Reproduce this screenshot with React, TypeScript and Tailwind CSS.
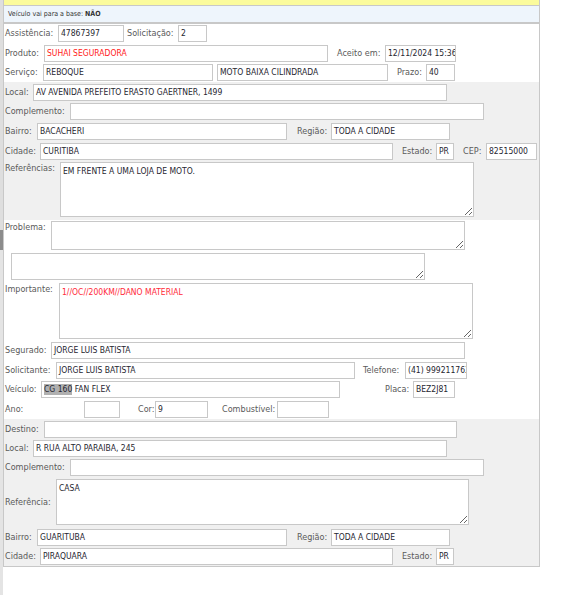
import React from "react";

const FONT = "font-['DejaVu_Sans_Condensed','DejaVu_Sans',sans-serif]";

function Lbl({ className = "", children }: { className?: string; children: React.ReactNode }) {
  return (
    <span className={`${FONT} shrink-0 whitespace-nowrap text-[9px] leading-[11px] text-[#5a5a5a] ${className}`}>
      {children}
    </span>
  );
}

function Box({ className = "", children }: { className?: string; children?: React.ReactNode }) {
  return (
    <div
      className={`${FONT} relative z-10 flex h-[17px] shrink-0 items-center overflow-hidden whitespace-nowrap border border-[#c8c8c8] bg-white px-[2px] text-[8.5px] leading-none text-[#262630] ${className}`}
    >
      {children}
    </div>
  );
}

function Area({ className = "", value = "" }: { className?: string; value?: string }) {
  return (
    <textarea
      readOnly
      defaultValue={value}
      className={`${FONT} shrink-0 border border-[#c8c8c8] bg-white px-[2px] pt-[3px] text-[8.5px] leading-[10px] text-[#262630] outline-none ${className}`}
    />
  );
}

export default function App() {
  return (
    <div className="flex h-[595px] w-[572px] overflow-hidden bg-white">
      {/* left strip */}
      <div className="flex h-full w-[3px] flex-col">
        <div className="h-[230px] bg-[#dedede]" />
        <div className="h-[20px] bg-[#8c8c8c]" />
        <div className="flex-1 bg-[#e4e4e4]" />
      </div>

      {/* main panel */}
      <div className="flex h-[567px] w-[537px] flex-col border-x border-b border-[#c8c8c8]">
        {/* yellow bar */}
        <div className="h-[6px] overflow-hidden border-b border-[#c8c8c8] bg-[#fbfb9c]">
          <div className={`${FONT} -mt-[10px] pl-[5px] text-[9px] leading-[11px] text-[#555]`}>
            Serviço agendado pela seguradora, aguardar a programação
          </div>
        </div>

        {/* blue bar */}
        <div className={`${FONT} flex h-[18px] items-center border-b-2 border-[#c8c8c8] bg-[#eef5fc] pl-[4px] text-[7px] text-[#333]`}>
          Veículo vai para a base: <span className="ml-[2px] font-bold">NÃO</span>
        </div>

        {/* section 1 */}
        <div className="flex flex-col bg-white pl-[1px]">
          <div className="flex h-[19px] items-center">
            <Lbl className="w-[53px]">Assistência:</Lbl>
            <Box className="w-[66px]">47867397</Box>
            <Lbl className="w-[54px] pl-[3px]">Solicitação:</Lbl>
            <Box className="w-[29px]">2</Box>
          </div>
          <div className="flex h-[20px] items-center">
            <Lbl className="w-[39px]">Produto:</Lbl>
            <Box className="w-[284px] text-[#ff2020]">SUHAI SEGURADORA</Box>
            <Lbl className="w-[57px] pl-[9px]">Aceito em:</Lbl>
            <Box className="w-[71px]">12/11/2024 15:36</Box>
          </div>
          <div className="flex h-[19px] items-center">
            <Lbl className="w-[38px]">Serviço:</Lbl>
            <Box className="w-[170px]">REBOQUE</Box>
            <div className="w-[4px] shrink-0" />
            <Box className="w-[171px]">MOTO BAIXA CILINDRADA</Box>
            <Lbl className="w-[38px] pl-[9px]">Prazo:</Lbl>
            <Box className="w-[29px]">40</Box>
          </div>
        </div>

        {/* section 2 */}
        <div className="flex flex-col bg-[#f0f0f0] pl-[1px]">
          <div className="flex h-[20px] items-center">
            <Lbl className="w-[28px]">Local:</Lbl>
            <Box className="w-[414px]">AV AVENIDA PREFEITO ERASTO GAERTNER, 1499</Box>
          </div>
          <div className="flex h-[19px] items-center">
            <Lbl className="w-[65px]">Complemento:</Lbl>
            <Box className="w-[414px]" />
          </div>
          <div className="flex h-[20px] items-center">
            <Lbl className="w-[32px]">Bairro:</Lbl>
            <Box className="w-[250px]">BACACHERI</Box>
            <Lbl className="w-[44px] pl-[10px]">Região:</Lbl>
            <Box className="w-[119px]">TODA A CIDADE</Box>
          </div>
          <div className="flex h-[20px] items-center">
            <Lbl className="w-[35px]">Cidade:</Lbl>
            <Box className="w-[353px]">CURITIBA</Box>
            <Lbl className="w-[43px] pl-[9px]">Estado:</Lbl>
            <Box className="w-[18px]">PR</Box>
            <Lbl className="w-[32px] pl-[9px]">CEP:</Lbl>
            <Box className="w-[51px]">82515000</Box>
          </div>
          <div className="flex h-[59px] items-start">
            <Lbl className="mt-[2px] w-[55px]">Referências:</Lbl>
            <Area className="mt-[1px] h-[55px] w-[414px]" value="EM FRENTE A UMA LOJA DE MOTO." />
          </div>
        </div>

        {/* section 3 */}
        <div className="flex flex-col bg-white pl-[1px]">
          <div className="flex h-[31px] items-start">
            <Lbl className="mt-[2px] w-[46px]">Problema:</Lbl>
            <Area className="mt-[1px] h-[29px] w-[414px]" />
          </div>
          <div className="flex h-[30px] items-start">
            <div className="w-[6px] shrink-0" />
            <Area className="mt-[2px] h-[27px] w-[414px]" />
          </div>
          <div className="flex h-[59px] items-start">
            <Lbl className="mt-[3px] w-[54px]">Importante:</Lbl>
            <Area className="mt-[2px] h-[56px] w-[414px] text-[#ff2a3a]" value="1//OC//200KM//DANO MATERIAL" />
          </div>
          <div className="flex h-[20px] items-center">
            <Lbl className="w-[46px]">Segurado:</Lbl>
            <Box className="w-[414px]">JORGE LUIS BATISTA</Box>
          </div>
          <div className="flex h-[20px] items-center">
            <Lbl className="w-[51px]">Solicitante:</Lbl>
            <Box className="w-[299px]">JORGE LUIS BATISTA</Box>
            <Lbl className="w-[50px] pl-[8px]">Telefone:</Lbl>
            <Box className="w-[62px]">(41) 999211763</Box>
          </div>
          <div className="flex h-[19px] items-center">
            <Lbl className="w-[36px]">Veículo:</Lbl>
            <Box className="w-[299px]">
              <span className="bg-[#b0b0b0] py-[1px]">CG 160</span>
              <span>&nbsp;FAN FLEX</span>
            </Box>
            <Lbl className="w-[73px] pl-[45px]">Placa:</Lbl>
            <Box className="w-[42px]">BEZ2J81</Box>
          </div>
          <div className="flex h-[20px] items-center">
            <Lbl className="w-[79px]">Ano:</Lbl>
            <Box className="w-[36px]" />
            <Lbl className="w-[35px] pl-[18px]">Cor:</Lbl>
            <Box className="w-[53px]">9</Box>
            <Lbl className="w-[69px] pl-[14px]">Combustível:</Lbl>
            <Box className="w-[52px]" />
          </div>
        </div>

        {/* section 4 */}
        <div className="flex flex-col bg-[#f0f0f0] pl-[1px]">
          <div className="flex h-[20px] items-center">
            <Lbl className="w-[39px]">Destino:</Lbl>
            <Box className="w-[413px]" />
          </div>
          <div className="flex h-[19px] items-center">
            <Lbl className="w-[28px]">Local:</Lbl>
            <Box className="w-[414px]">R RUA ALTO PARAIBA, 245</Box>
          </div>
          <div className="flex h-[19px] items-center">
            <Lbl className="w-[65px]">Complemento:</Lbl>
            <Box className="w-[414px]" />
          </div>
          <div className="flex h-[50px] items-center">
            <Lbl className="w-[51px]">Referência:</Lbl>
            <Area className="h-[46px] w-[413px]" value="CASA" />
          </div>
          <div className="flex h-[20px] items-center">
            <Lbl className="w-[32px]">Bairro:</Lbl>
            <Box className="w-[250px]">GUARITUBA</Box>
            <Lbl className="w-[44px] pl-[10px]">Região:</Lbl>
            <Box className="w-[119px]">TODA A CIDADE</Box>
          </div>
          <div className="flex h-[19px] items-center">
            <Lbl className="w-[35px]">Cidade:</Lbl>
            <Box className="w-[353px]">PIRAQUARA</Box>
            <Lbl className="w-[43px] pl-[9px]">Estado:</Lbl>
            <Box className="w-[18px]">PR</Box>
          </div>
        </div>
      </div>
    </div>
  );
}
